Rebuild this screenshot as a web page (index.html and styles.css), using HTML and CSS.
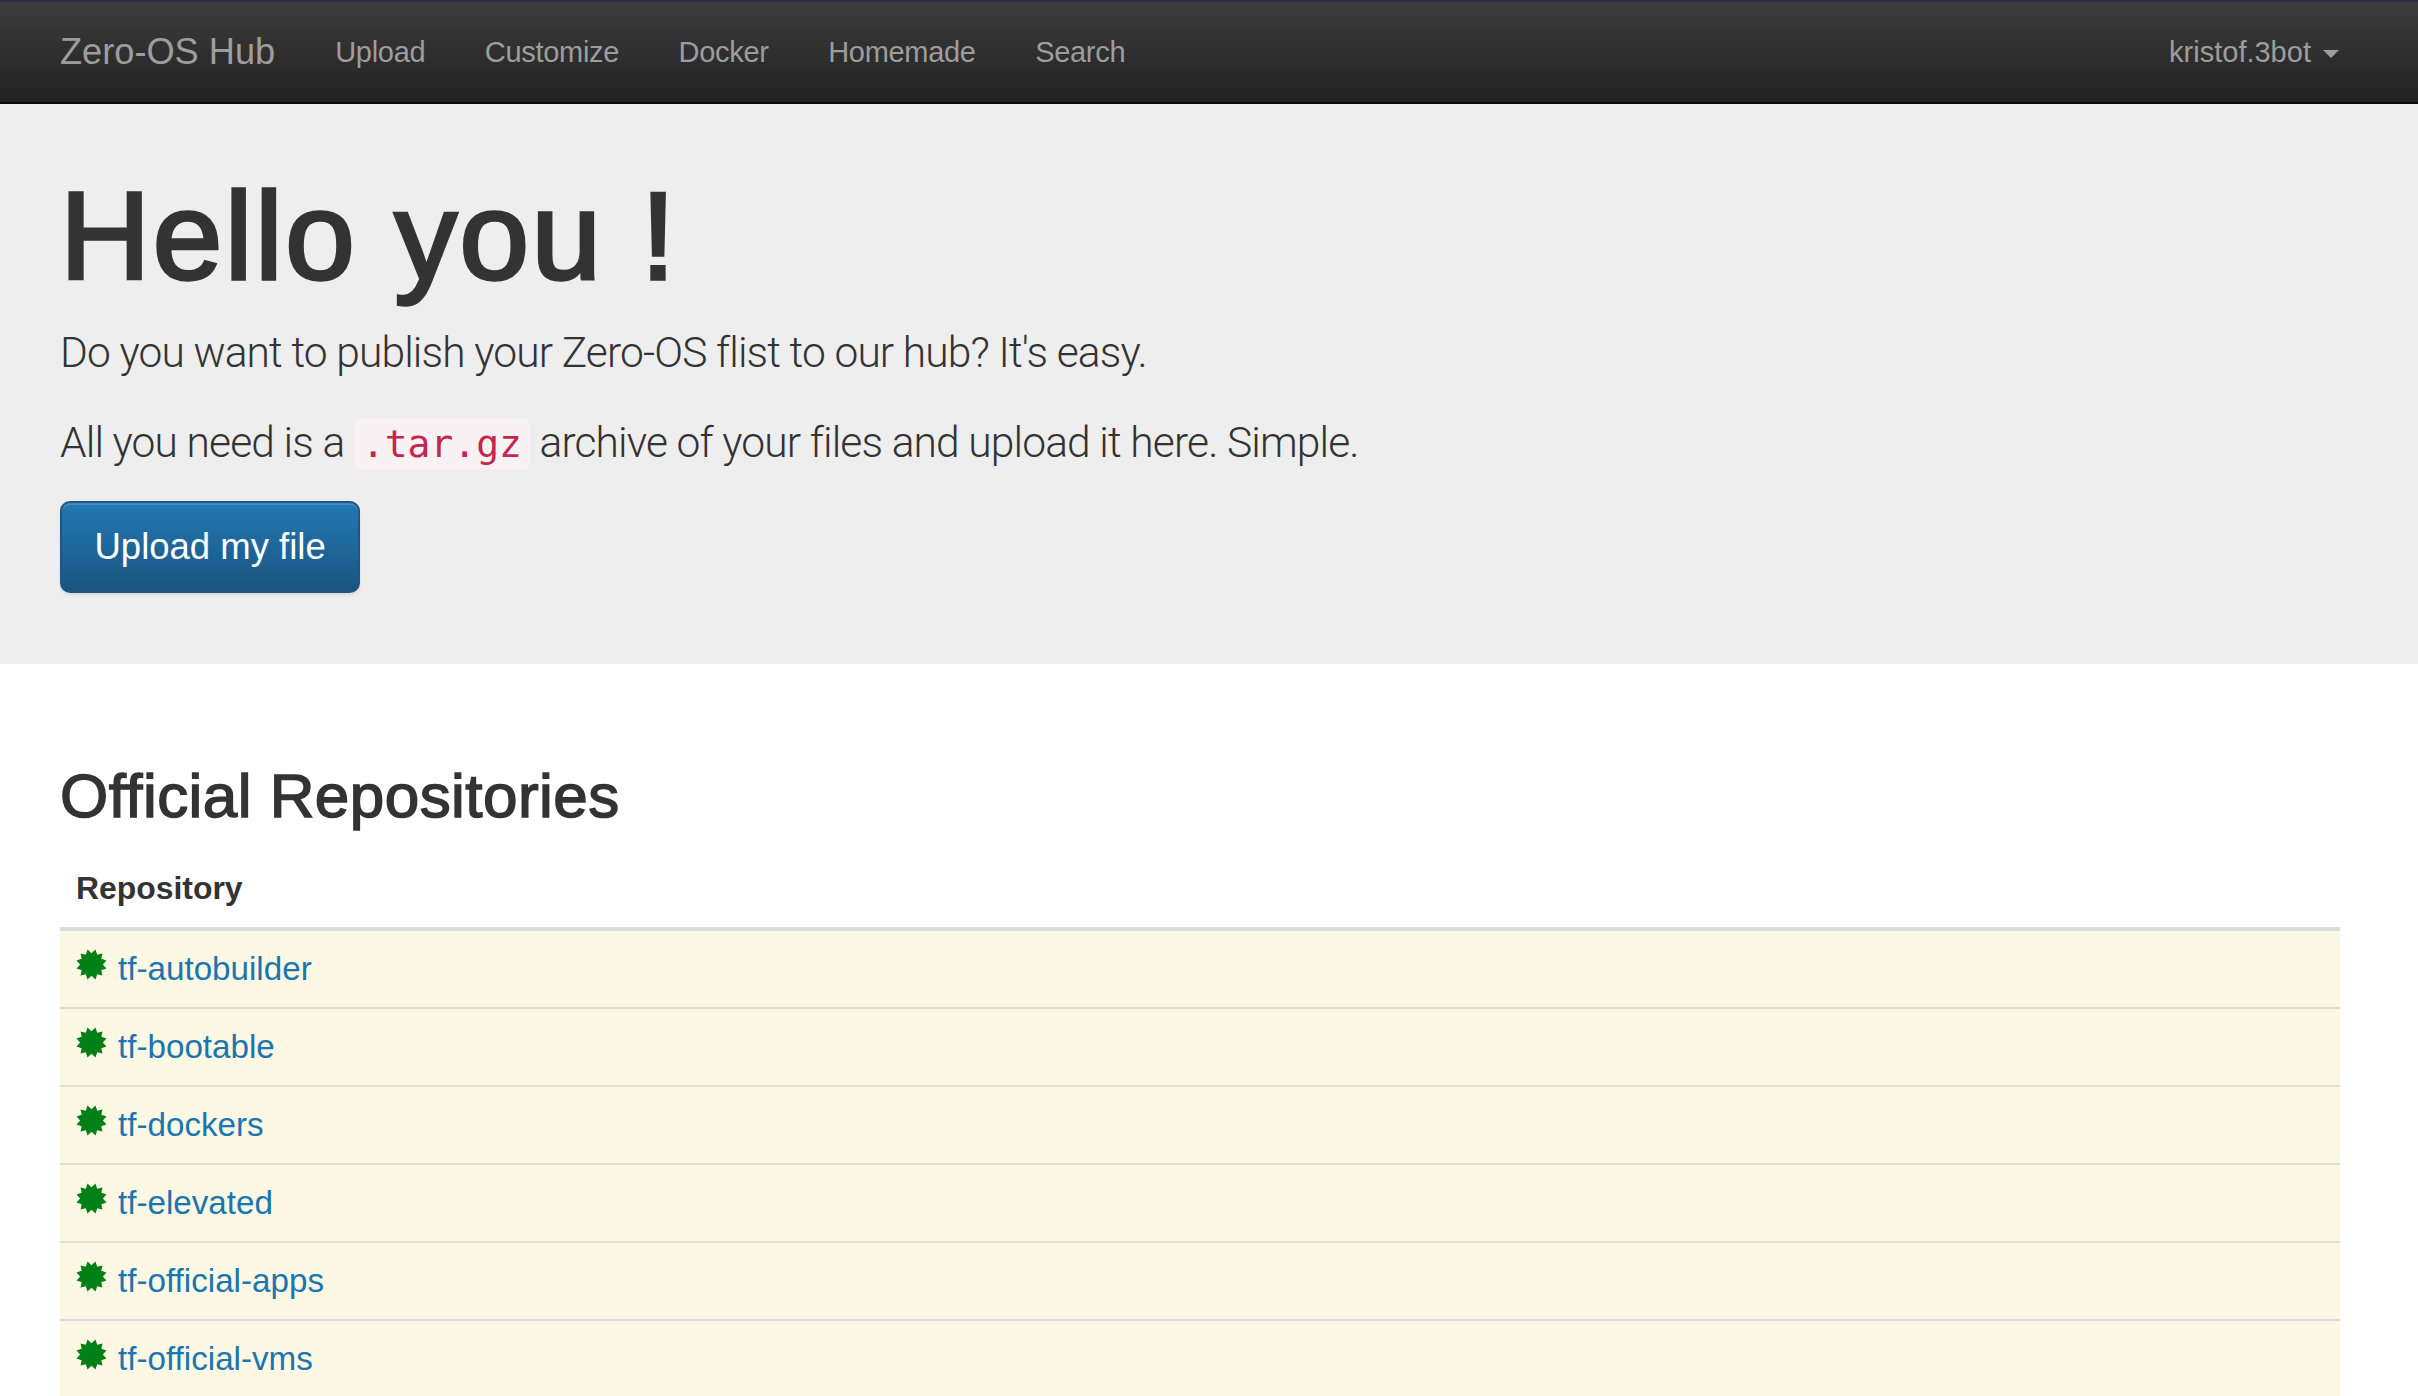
FILE: index.html
```html
<!DOCTYPE html>
<html lang="en">
<head>
  <meta charset="UTF-8">
  <title>Zero-OS Hub</title>
  <link rel="stylesheet" href="styles.css">
</head>
<body>

  <svg class="defs" width="0" height="0">
    <symbol id="burst" viewBox="0 0 30 30">
      <polygon transform="rotate(15 15 15)" points="15,0 17.85,4.37 22.5,2.01 22.78,7.22 27.99,7.5 25.63,12.15 30,15 25.63,17.85 27.99,22.5 22.78,22.78 22.5,27.99 17.85,25.63 15,30 12.15,25.63 7.5,27.99 7.22,22.78 2.01,22.5 4.37,17.85 0,15 4.37,12.15 2.01,7.5 7.22,7.22 7.5,2.01 12.15,4.37"/>
    </symbol>
  </svg>

  <!-- Navbar -->
  <nav class="navbar">
    <a class="brand" href="#">Zero-OS Hub</a>
    <ul class="nav-links">
      <li><a href="#">Upload</a></li>
      <li><a href="#">Customize</a></li>
      <li><a href="#">Docker</a></li>
      <li><a href="#">Homemade</a></li>
      <li><a href="#">Search</a></li>
    </ul>
    <a class="user-menu" href="#">kristof.3bot <span class="caret"></span></a>
  </nav>

  <!-- Jumbotron -->
  <section class="jumbotron">
    <h1>Hello you !</h1>
    <p class="lead">Do you want to publish your Zero-OS flist to our hub? It's easy.</p>
    <p class="lead">All you need is a <code>.tar.gz</code> archive of your files and upload it here. Simple.</p>
    <a class="btn-upload" href="#">Upload my file</a>
  </section>

  <!-- Repositories -->
  <main class="content">
    <h2>Official Repositories</h2>
    <table class="repos">
      <thead>
        <tr><th>Repository</th></tr>
      </thead>
      <tbody>
        <tr><td><svg class="burst"><use href="#burst"/></svg><a href="#">tf-autobuilder</a></td></tr>
        <tr><td><svg class="burst"><use href="#burst"/></svg><a href="#">tf-bootable</a></td></tr>
        <tr><td><svg class="burst"><use href="#burst"/></svg><a href="#">tf-dockers</a></td></tr>
        <tr><td><svg class="burst"><use href="#burst"/></svg><a href="#">tf-elevated</a></td></tr>
        <tr><td><svg class="burst"><use href="#burst"/></svg><a href="#">tf-official-apps</a></td></tr>
        <tr><td><svg class="burst"><use href="#burst"/></svg><a href="#">tf-official-vms</a></td></tr>
      </tbody>
    </table>
  </main>

</body>
</html>
```

FILE: styles.css
```css
html {
  overflow: hidden;
}

body {
  margin: 0;
  font-family: "Liberation Sans", Arial, sans-serif;
  font-size: 29.4px;
  line-height: 42px;
  color: #333;
  background-color: #fff;
}

a {
  text-decoration: none;
}

.defs {
  position: absolute;
}

/* Navbar */
.navbar {
  display: flex;
  align-items: center;
  box-sizing: border-box;
  height: 104px;
  padding: 0 60px;
  border-top: 2px solid #2b2d42;
  border-bottom: 2px solid #080808;
  background-image: linear-gradient(to bottom, #3c3c3c, #222);
}

.brand {
  font-size: 36.2px;
  color: #9d9d9d;
}

.nav-links {
  display: flex;
  gap: 59.5px;
  margin: 0 0 0 60px;
  padding: 0;
  list-style: none;
}

.nav-links a {
  font-size: 29px;
  letter-spacing: -0.3px;
  color: #9d9d9d;
}

.user-menu {
  margin-left: auto;
  margin-right: 19px;
  font-size: 29px;
  color: #9d9d9d;
}

.caret {
  display: inline-block;
  margin-left: 4px;
  vertical-align: middle;
  border-top: 8px solid #9d9d9d;
  border-left: 8px solid transparent;
  border-right: 8px solid transparent;
}

/* Jumbotron */
.jumbotron {
  height: 560px;
  box-sizing: border-box;
  padding: 62px 60px 0;
  background-color: #eee;
}

.jumbotron h1 {
  margin: 0 0 17px;
  font-size: 125px;
  font-weight: 500;
  line-height: 140px;
  letter-spacing: 2.5px;
  -webkit-text-stroke: 3.5px #333;
}

.lead {
  margin: 0 0 30px;
  font-family: Roboto, "Liberation Sans", sans-serif;
  font-size: 42.5px;
  font-weight: 300;
  line-height: 60px;
  letter-spacing: -0.86px;
}

code {
  padding: 4px 8px;
  font-family: "DejaVu Sans Mono", monospace;
  font-size: 38px;
  font-weight: 400;
  letter-spacing: 0;
  color: #c7254e;
  background-color: #f9f2f4;
  border-radius: 8px;
}

.btn-upload {
  display: inline-block;
  margin-top: -3px;
  padding: 19px 32.5px;
  font-size: 36.5px;
  line-height: 50px;
  color: #fff;
  border: 2px solid #245580;
  border-radius: 10px;
  background-image: linear-gradient(to bottom, #2279b4, #1a5480);
  box-shadow: inset 0 2px 0 rgba(255, 255, 255, 0.15), 0 2px 3px rgba(0, 0, 0, 0.08);
}

/* Repositories */
.content {
  padding: 0 78px 0 60px;
}

.content h2 {
  margin: 97px 0 19px;
  font-size: 62px;
  font-weight: 500;
  line-height: 70px;
  letter-spacing: 0.45px;
  -webkit-text-stroke: 1.5px #333;
}

.repos {
  width: 100%;
  border-collapse: collapse;
}

.repos th {
  padding: 16px 16px 17px;
  font-size: 31.9px;
  line-height: 44px;
  text-align: left;
  border-bottom: 4px solid #ddd;
}

.repos td {
  height: 76px;
  padding: 0 16px;
  font-size: 33.2px;
  background-color: #fcf8e3;
  border-bottom: 2px solid #ddd;
}

.repos td a {
  color: #1b75b0;
}

.burst {
  width: 31px;
  height: 31px;
  margin-right: 11px;
  fill: #008016;
}
```
